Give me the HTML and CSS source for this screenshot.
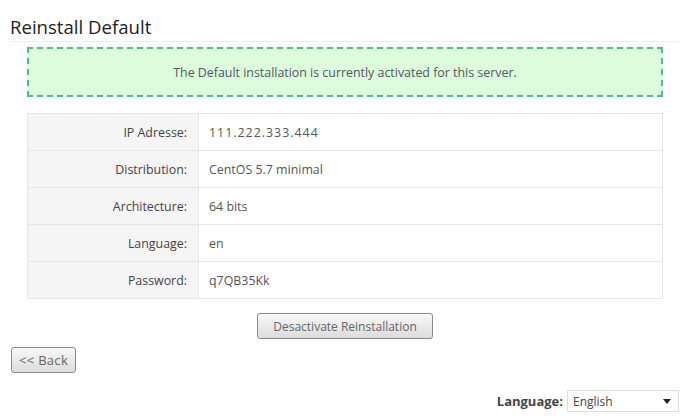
FILE: index.html
```html
<!DOCTYPE html>
<html>
<head>
<meta charset="utf-8">
<link rel="stylesheet" href="styles.css">
</head>
<body>
<div class="page">
  <h1 class="title">Reinstall Default</h1>
  <div class="content">
    <div class="notice">The Default installation is currently activated for this server.</div>
    <table class="info">
      <tr><th>IP Adresse:</th><td class="ip">111.222.333.444</td></tr>
      <tr><th>Distribution:</th><td>CentOS 5.7 minimal</td></tr>
      <tr><th>Architecture:</th><td>64 bits</td></tr>
      <tr><th>Language:</th><td>en</td></tr>
      <tr><th>Password:</th><td>q7QB35Kk</td></tr>
    </table>
    <div class="actions"><button class="btn">Desactivate Reinstallation</button></div>
  </div>
  <div class="back-row"><button class="btn btn-back">&lt;&lt; Back</button></div>
  <div class="lang-row">
    <label class="lang-label">Language:</label>
    <div class="select"><span>English</span><svg width="8" height="5" viewBox="0 0 8 5"><path d="M0 0h8L4 5z" fill="#222"/></svg></div>
  </div>
</div>
</body>
</html>
```
FILE: styles.css
```css
* { box-sizing: border-box; }
html, body { margin: 0; background: #fff; }
body { font-family: "Open Sans", sans-serif; color: #555; font-size: 12.4px; }
.page { padding: 16px 6px 0 10px; }
.title {
  margin: 0;
  font-size: 18.6px;
  font-weight: normal;
  color: #222;
  line-height: 22px;
  padding-bottom: 3px;
  border-bottom: 1px solid #eee;
}
.content { padding: 5px 16px 0 17px; }
.notice {
  height: 50px;
  background: #dcfcdc;
  border: 2px dashed #4cbb8e;
  display: flex;
  align-items: center;
  justify-content: center;
  color: #556;
}
.info {
  margin-top: 16px;
  width: 100%;
  border-collapse: collapse;
  border: 1px solid #e6e6e6;
}
.info th, .info td {
  height: 37px;
  border-top: 1px solid #e6e6e6;
  font-weight: normal;
  padding: 0;
}
.info th {
  width: 171px;
  text-align: right;
  background: #f5f5f5;
  color: #444;
  padding-right: 11px;
  border-right: 1px solid #e6e6e6;
}
.info td { padding-left: 10px; color: #555; }
.info td.ip { letter-spacing: 1px; }
.actions { display: flex; justify-content: center; padding: 14px 0 0 0; }
.btn {
  font-family: "Open Sans", sans-serif;
  font-size: 12px;
  color: #666;
  height: 26px;
  padding: 0 15px;
  border: 1px solid #8a8a8a;
  border-radius: 3px;
  background: linear-gradient(#f8f8f8, #dcdcdc);
  white-space: nowrap;
}
.back-row { padding-top: 8px; display: flex; }
.btn-back { padding: 0; height: 26px; margin-left: 1px; font-size: 13px; width: 65px; letter-spacing: 0.3px; }
.lang-row {
  display: flex;
  justify-content: flex-end;
  align-items: center;
  gap: 4px;
  margin-top: 17px;
}
.lang-label { font-weight: bold; color: #444; font-size: 13px; }
.select {
  width: 112px;
  height: 22px;
  border: 1px solid #ddd;
  display: flex;
  align-items: center;
  justify-content: space-between;
  padding: 0 7px 0 5px;
  color: #444;
  font-size: 12px;
}
```
